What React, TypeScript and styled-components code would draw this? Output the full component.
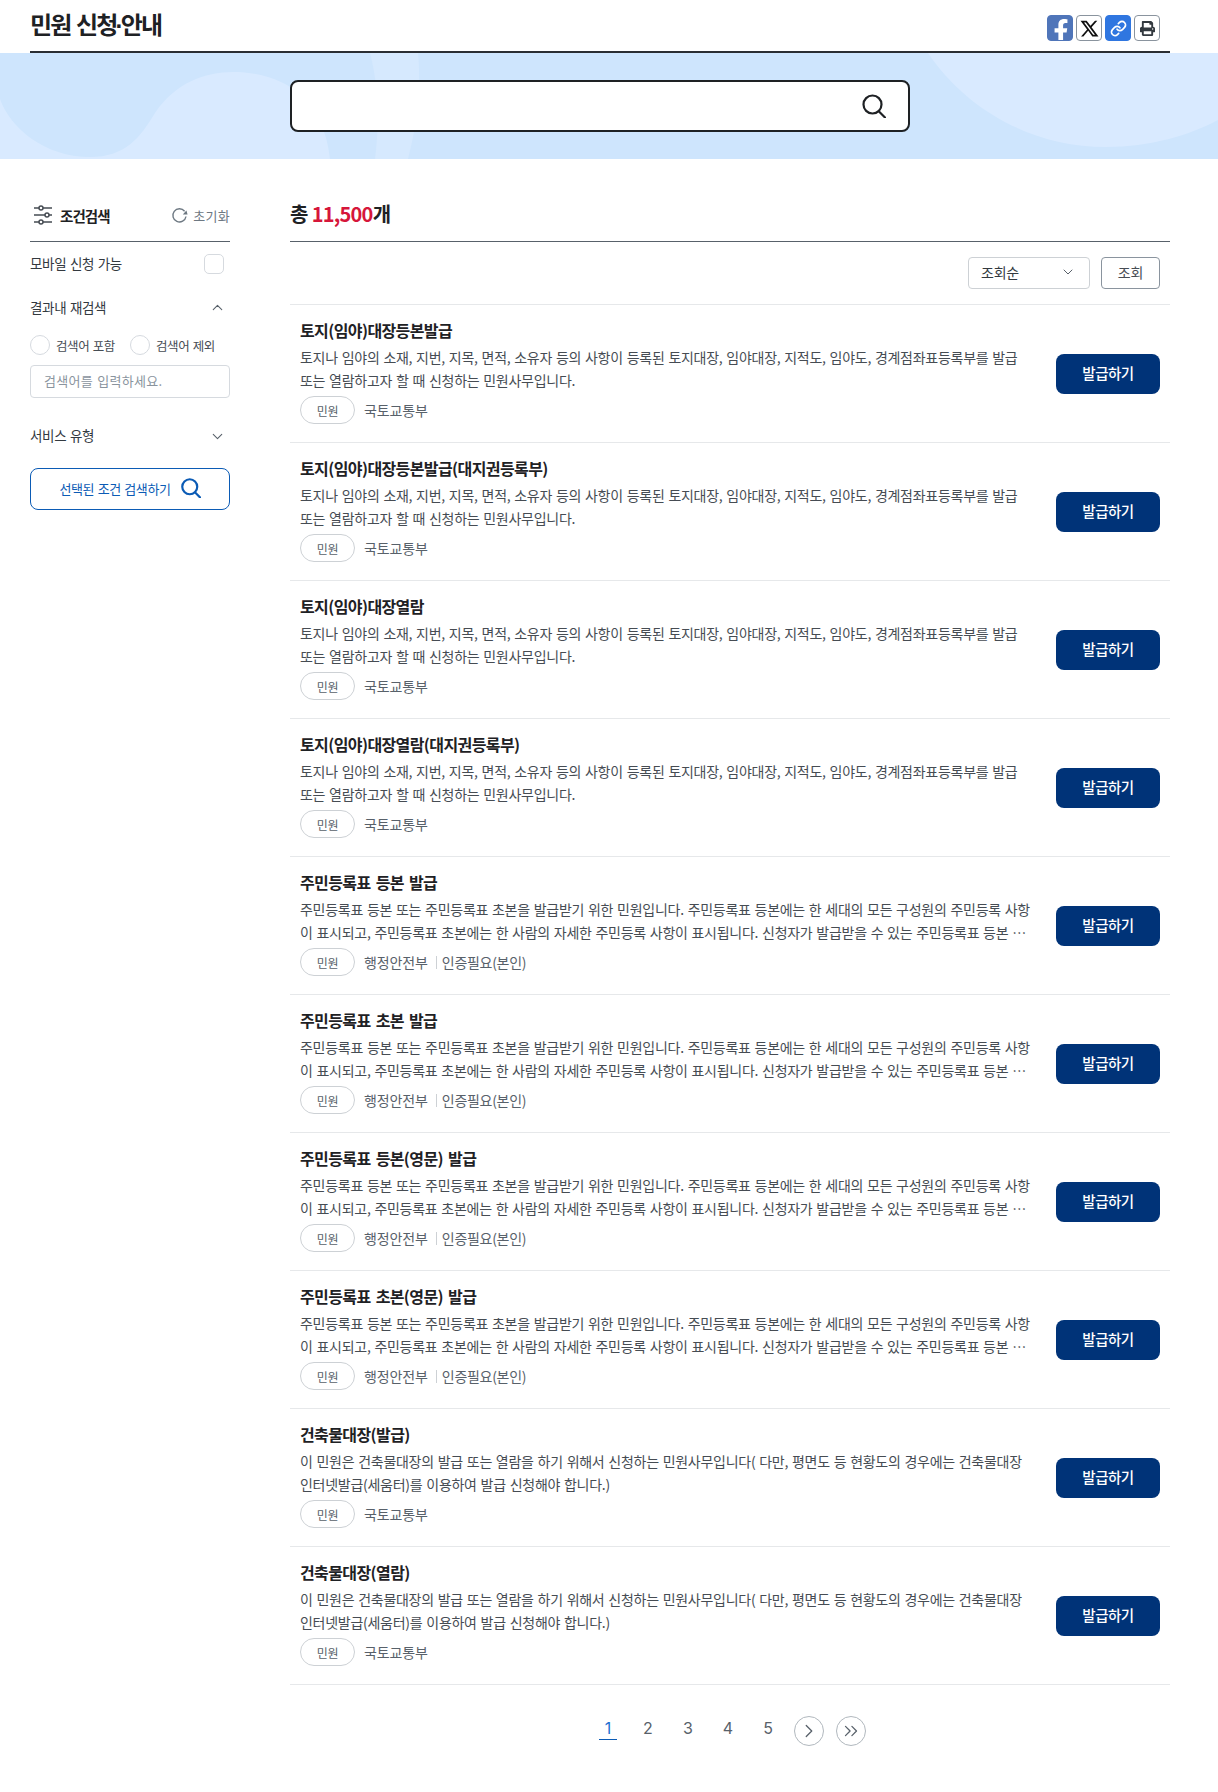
import React from "react";
import styled, { createGlobalStyle } from "styled-components";
import { RiTwitterXLine } from "react-icons/ri";
import { FaFacebookF, FaPrint } from "react-icons/fa";
import { ChevronDown, ChevronUp, ChevronRight, ChevronsRight, Link as LinkIcon } from "lucide-react";

const Global = createGlobalStyle`
  * { box-sizing: border-box; }
  html, body { margin: 0; padding: 0; background: #fff; }
  body { font-family: "Noto Sans CJK KR", "Noto Sans", sans-serif; color: #1e2124; }
  button, input { font-family: inherit; }
`;

const Page = styled.div`width: 1218px; height: 1792px; overflow: hidden;`;
const TopBar = styled.header`
  margin: 0 48px 0 30px; height: 53px; border-bottom: 2px solid #2a2e33;
  display: flex; align-items: flex-start; justify-content: space-between; padding: 7px 10px 0 0;
`;
const Title = styled.h1`margin: 0; font-size: 24px; line-height: 34px; font-weight: 700; letter-spacing: -1.85px; word-spacing: 2px; color: #1e2124;`;
const TitleDot = styled.span`font-family: "Liberation Sans", sans-serif; margin: 0 -1px;`;
const Share = styled.div`display: flex; gap: 3px; margin-top: 8px;`;
const ShareBtn = styled.span<{ $bg: string; $border: string; $color: string }>`
  width: 26px; height: 26px; border-radius: 4px; display: flex; align-items: center; justify-content: center; overflow: hidden;
  background: ${p => p.$bg}; border: 1px solid ${p => p.$border}; color: ${p => p.$color};
`;
const Banner = styled.section`
  position: relative; height: 106px; background: #cee5fd; display: flex; align-items: flex-start;
  padding: 27px 0 0 290px; overflow: hidden;
`;
const BannerArt = styled.svg`position: absolute; left: 0; top: 0; width: 1218px; height: 106px;`;
const SearchBox = styled.div`
  position: relative; width: 620px; height: 52px; background: #fff; border: 2px solid #1e2124; border-radius: 8px;
  display: flex; align-items: center; justify-content: flex-end; padding-right: 22px; color: #1e2124;
`;
const Main = styled.main`display: flex; padding: 0 48px 0 30px; gap: 60px;`;
const Side = styled.aside`width: 200px; flex: none; padding-top: 36px;`;
const SideHead = styled.div`
  height: 47px; border-bottom: 1px solid #58616a; display: flex; align-items: center; justify-content: space-between;
`;
const SideHeadLeft = styled.div`display: flex; align-items: center; gap: 7px; padding-left: 3px; font-size: 14.5px; font-weight: 700; letter-spacing: -0.95px; margin-top: -6px;`;
const Reset = styled.div`display: flex; align-items: center; gap: 5px; font-size: 13px; color: #6d7882; letter-spacing: 0.3px; margin-top: -5px;`;
const SideRow = styled.div<{ $h: number; $top?: number }>`
  height: ${p => p.$h}px; margin-top: ${p => p.$top ?? 0}px; display: flex; align-items: center; justify-content: space-between;
  font-size: 13.5px; color: #33393f; letter-spacing: -0.35px; word-spacing: 1px;
`;
const RowLabel = styled.span`padding-bottom: 2px;`;
const Check = styled.span`width: 20px; height: 20px; border: 1px solid #d6dadf; border-radius: 5px; margin-right: 6px;`;
const Chevron = styled.span`display: flex; color: #58616a; margin-right: 4px;`;
const Radios = styled.div`display: flex; align-items: center; height: 20px; margin-top: 7px; font-size: 12.5px; color: #464c53; letter-spacing: -0.4px; word-spacing: 1px;`;
const Radio = styled.span`width: 20px; height: 20px; border: 1px solid #d6dadf; border-radius: 50%; margin-right: 6px; flex: none;`;
const RadioText = styled.span`width: 74px;`;
const KeywordInput = styled.input`
  display: block; width: 200px; height: 33px; margin-top: 10px; border: 1px solid #d6dadf; border-radius: 4px; padding: 0 13px 2px;
  font-size: 13px; letter-spacing: 0.3px; word-spacing: 1px; outline: none;
  &::placeholder { color: #8a949e; opacity: 1; }
`;
const SideSearch = styled.button`
  width: 200px; height: 42px; margin-top: 13px; background: #fff; border: 1px solid #0b5bb5; border-radius: 8px; color: #0b5bb5;
  display: flex; align-items: center; justify-content: center; gap: 10px; font-size: 13px; letter-spacing: -0.4px; word-spacing: 1px; padding: 0 0 2px;
`;
const Content = styled.div`width: 880px; flex: none; padding-top: 36px;`;
const Total = styled.div`
  height: 47px; border-bottom: 1px solid #58616a; font-size: 20px; line-height: 26px; font-weight: 700; letter-spacing: -1.4px; word-spacing: 1.5px; padding-top: 6px;
`;
const TotalNum = styled.em`font-style: normal; color: #d6163a; letter-spacing: -0.75px;`;
const SortBar = styled.div`height: 63px; display: flex; justify-content: flex-end; align-items: flex-start; gap: 11px; padding: 15px 10px 0 0; border-bottom: 1px solid #e6e8ea;`;
const Select = styled.div`
  width: 122px; height: 32px; border: 1px solid #cdd1d5; border-radius: 4px; display: flex; align-items: center; justify-content: space-between;
  padding: 0 13px 2px 12px; font-size: 14px; color: #33393f; letter-spacing: -0.2px;
`;
const LookBtn = styled.button`width: 59px; height: 32px; border: 1px solid #8a949e; border-radius: 4px; background: #fff; font-size: 14px; color: #464c53; letter-spacing: -0.2px; padding: 0 0 2px;`;
const Row = styled.article`height: 138px; border-bottom: 1px solid #e6e8ea; display: flex; align-items: center; justify-content: space-between; padding: 0 10px;`;
const RowBody = styled.div`width: 733px; align-self: flex-start; padding-top: 13px;`;
const RowTitle = styled.h3`margin: 0; font-size: 16px; line-height: 24px; font-weight: 700; letter-spacing: -0.6px; word-spacing: 2px; color: #1e2124;`;
const Desc = styled.p`
  margin: 4px 0 0; font-size: 14px; line-height: 23px; height: 46px; color: #464c53; letter-spacing: -0.27px; word-spacing: 1px;
`;
const Meta = styled.div`display: flex; align-items: center; margin-top: 4px; height: 28px; font-size: 14px; color: #58616a; letter-spacing: -0.12px;`;
const Tag = styled.span`width: 55px; height: 28px; border: 1px solid #cdd1d5; border-radius: 14px; display: flex; align-items: center; justify-content: center; font-size: 12px; color: #58616a; margin-right: 9px; letter-spacing: -0.2px;`;
const Extra = styled.span`margin-left: 8px; padding-left: 6px; position: relative; letter-spacing: -0.3px; &::before { content: ""; position: absolute; left: 0; top: 4px; bottom: 3px; width: 1px; background: #cdd1d5; }`;
const IssueBtn = styled.button`flex: none; width: 104px; height: 40px; border: 0; border-radius: 8px; background: #003378; color: #fff; font-size: 14.5px; font-weight: 500; letter-spacing: -0.5px; padding: 0 0 2px;`;
const Pager = styled.nav`display: flex; align-items: center; height: 30px; margin: 31px 0 0 298px; font-family: "Inter", "Noto Sans", sans-serif;`;
const Num = styled.span<{ $on?: boolean }>`
  width: 40px; text-align: center; font-size: 16px; height: 30px; line-height: 25px; position: relative; color: ${p => p.$on ? "#1f6fd1" : "#58616a"};
  ${p => p.$on ? `&::after { content: ""; position: absolute; left: 11px; width: 18px; bottom: 6px; height: 1px; border-bottom: 1.5px solid #0b5bb5; }` : ""}
`;
const Circle = styled.span`width: 30px; height: 30px; border: 1px solid #b1b8be; border-radius: 50%; display: flex; align-items: center; justify-content: center; color: #58616a; margin-left: 6px; & + & { margin-left: 12px; }`;

const LAND = "토지나 임야의 소재, 지번, 지목, 면적, 소유자 등의 사항이 등록된 토지대장, 임야대장, 지적도, 임야도, 경계점좌표등록부를 발급 또는 열람하고자 할 때 신청하는 민원사무입니다.";
const RES = "주민등록표 등본 또는 주민등록표 초본을 발급받기 위한 민원입니다. 주민등록표 등본에는 한 세대의 모든 구성원의 주민등록 사항이 표시되고, 주민등록표 초본에는 한 사람의 자세한 주민등록 사항이 표시됩니다. 신청자가 발급받을 수 있는 주민등록표 등본 …";
const BLD = "이 민원은 건축물대장의 발급 또는 열람을 하기 위해서 신청하는 민원사무입니다( 다만, 평면도 등 현황도의 경우에는 건축물대장 인터넷발급(세움터)를 이용하여 발급 신청해야 합니다.)";
const MOLIT = "국토교통부";
const MOIS = "행정안전부";

const rows = [
  { t: "토지(임야)대장등본발급", d: LAND, o: MOLIT },
  { t: "토지(임야)대장등본발급(대지권등록부)", d: LAND, o: MOLIT },
  { t: "토지(임야)대장열람", d: LAND, o: MOLIT },
  { t: "토지(임야)대장열람(대지권등록부)", d: LAND, o: MOLIT },
  { t: "주민등록표 등본 발급", d: RES, o: MOIS, x: "인증필요(본인)" },
  { t: "주민등록표 초본 발급", d: RES, o: MOIS, x: "인증필요(본인)" },
  { t: "주민등록표 등본(영문) 발급", d: RES, o: MOIS, x: "인증필요(본인)" },
  { t: "주민등록표 초본(영문) 발급", d: RES, o: MOIS, x: "인증필요(본인)" },
  { t: "건축물대장(발급)", d: BLD, o: MOLIT },
  { t: "건축물대장(열람)", d: BLD, o: MOLIT },
];

const Sliders = () => (
  <svg width="20" height="20" viewBox="0 0 20 20" fill="none" stroke="#464c53" strokeWidth="1.5">
    <path d="M1 3h5M10 3h9M1 10h11M16 10h3M1 17h5M10 17h9" />
    <circle cx="8" cy="3" r="2" /><circle cx="14" cy="10" r="2" /><circle cx="8" cy="17" r="2" />
  </svg>
);

const ResetIcon = () => (
  <svg width="17" height="17" viewBox="0 0 17 17" fill="none">
    <path d="M13.6 4.2A6.6 6.6 0 1 0 15 9.5" stroke="#6d7882" strokeWidth="1.4" />
    <path d="M16.6 7.4 11.8 7.6 15.4 3.6Z" fill="#6d7882" />
  </svg>
);

const Lens = ({ size, weight }: { size: number; weight: number }) => (
  <svg width={size} height={size} viewBox="0 0 24 24" fill="none" stroke="currentColor" strokeWidth={weight} strokeLinecap="round">
    <circle cx="10.5" cy="10.5" r="9" />
    <path d="M17 17.5 23 23.5" />
  </svg>
);

export default function App() {
  return (
    <Page>
      <Global />
      <TopBar>
        <Title>민원 신청<TitleDot>·</TitleDot>안내</Title>
        <Share>
          <ShareBtn $bg="#4f75b9" $border="#4f75b9" $color="#fff"><FaFacebookF size={24} style={{ marginTop: 5, marginLeft: 2 }} /></ShareBtn>
          <ShareBtn $bg="#fff" $border="#8a949e" $color="#111"><RiTwitterXLine size={21} /></ShareBtn>
          <ShareBtn $bg="#2f76e0" $border="#2f76e0" $color="#fff"><LinkIcon size={17} strokeWidth={2.4} /></ShareBtn>
          <ShareBtn $bg="#fff" $border="#8a949e" $color="#33393f"><FaPrint size={15} /></ShareBtn>
        </Share>
      </TopBar>
      <Banner>
        <BannerArt viewBox="0 0 1218 106" aria-hidden="true">
          <path fill="#d9eaff" d="M0 46 C10 75 45 104 90 104 C125 104 140 85 155 60 C175 30 205 19 233 19 C265 19 295 30 312 55 C325 75 328 90 330 106 L0 106Z" />
          <path fill="#d6e9fe" d="M370 0 H418 C422 40 415 80 408 106 H375 C380 70 378 30 370 0Z" />
          <path fill="#d9eaff" d="M928 0 C965 55 1030 94 1106 94 C1150 94 1190 82 1218 67 V0Z" />
        </BannerArt>
        <SearchBox><Lens size={24} weight={2.2} /></SearchBox>
      </Banner>
      <Main>
        <Side>
          <SideHead>
            <SideHeadLeft><Sliders />조건검색</SideHeadLeft>
            <Reset><ResetIcon />초기화</Reset>
          </SideHead>
          <SideRow $h={44}><RowLabel>모바일 신청 가능</RowLabel><Check /></SideRow>
          <SideRow $h={42}>결과내 재검색<Chevron><ChevronUp size={17} strokeWidth={1.5} /></Chevron></SideRow>
          <Radios>
            <Radio /><RadioText>검색어 포함</RadioText>
            <Radio /><RadioText>검색어 제외</RadioText>
          </Radios>
          <KeywordInput placeholder="검색어를 입력하세요." />
          <SideRow $h={38} $top={19}><RowLabel>서비스 유형</RowLabel><Chevron><ChevronDown size={17} strokeWidth={1.5} /></Chevron></SideRow>
          <SideSearch>선택된 조건 검색하기<Lens size={20} weight={2.6} /></SideSearch>
        </Side>
        <Content>
          <Total>총 <TotalNum>11,500</TotalNum>개</Total>
          <SortBar>
            <Select>조회순<ChevronDown size={16} strokeWidth={1.5} color="#58616a" /></Select>
            <LookBtn>조회</LookBtn>
          </SortBar>
          {rows.map(r => (
            <Row key={r.t}>
              <RowBody>
                <RowTitle>{r.t}</RowTitle>
                <Desc>{r.d}</Desc>
                <Meta>
                  <Tag>민원</Tag>{r.o}{r.x ? <Extra>{r.x}</Extra> : null}
                </Meta>
              </RowBody>
              <IssueBtn>발급하기</IssueBtn>
            </Row>
          ))}
          <Pager>
            <Num $on>1</Num><Num>2</Num><Num>3</Num><Num>4</Num><Num>5</Num>
            <Circle><ChevronRight size={22} strokeWidth={1.4} /></Circle>
            <Circle><ChevronsRight size={22} strokeWidth={1.4} /></Circle>
          </Pager>
        </Content>
      </Main>
    </Page>
  );
}
